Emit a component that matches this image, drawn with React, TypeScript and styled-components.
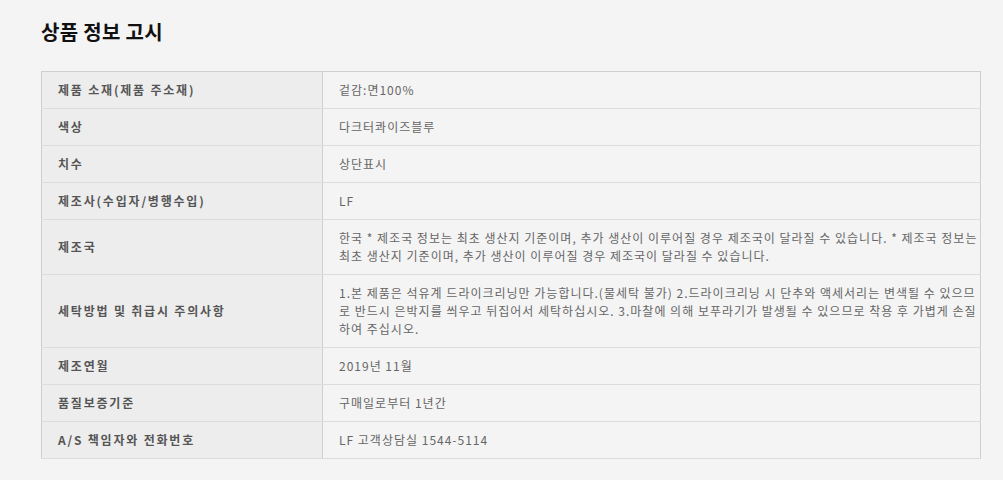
import React from "react"
import styled, { createGlobalStyle } from "styled-components"

const GlobalStyle = createGlobalStyle`
  html, body {
    margin: 0;
    padding: 0;
    background: #f4f4f4;
  }

  body {
    font-family: "Noto Sans CJK KR", "Noto Sans", sans-serif;
  }
`

const NoticeSection = styled.section`
  padding: 18px 22px 0 41px;
  width: 940px;
`

const Title = styled.h2`
  margin: 0 0 25px;
  font-size: 20px;
  line-height: 28px;
  font-weight: 700;
  color: #111;
  letter-spacing: 0.3px;
`

const InfoTable = styled.table`
  width: 940px;
  border-collapse: collapse;
  border: 1px solid #cfcfcf;
  table-layout: fixed;
`

const LabelCell = styled.th`
  width: 281px;
  box-sizing: border-box;
  padding: 9px 16px;
  background: #ededed;
  border-right: 1px solid #cfcfcf;
  border-bottom: 1px solid #dcdcdc;
  text-align: left;
  vertical-align: middle;
  font-size: 12px;
  line-height: 18px;
  font-weight: 700;
  color: #555;
  letter-spacing: 1.8px;
`

const ValueCell = styled.td`
  padding: 9px 2px 9px 16px;
  border-bottom: 1px solid #dcdcdc;
  font-size: 12px;
  line-height: 18px;
  color: #666;
  word-break: break-all;
  letter-spacing: 1px;
`

const rows = [
  { label: "제품 소재(제품 주소재)", value: "겉감:면100%" },
  { label: "색상", value: "다크터콰이즈블루" },
  { label: "치수", value: "상단표시" },
  { label: "제조사(수입자/병행수입)", value: "LF" },
  {
    label: "제조국",
    value:
      "한국 * 제조국 정보는 최초 생산지 기준이며, 추가 생산이 이루어질 경우 제조국이 달라질 수 있습니다. * 제조국 정보는 최초 생산지 기준이며, 추가 생산이 이루어질 경우 제조국이 달라질 수 있습니다.",
  },
  {
    label: "세탁방법 및 취급시 주의사항",
    value:
      "1.본 제품은 석유계 드라이크리닝만 가능합니다.(물세탁 불가) 2.드라이크리닝 시 단추와 액세서리는 변색될 수 있으므로 반드시 은박지를 씌우고 뒤집어서 세탁하십시오. 3.마찰에 의해 보푸라기가 발생될 수 있으므로 착용 후 가볍게 손질하여 주십시오.",
  },
  { label: "제조연월", value: "2019년 11월" },
  { label: "품질보증기준", value: "구매일로부터 1년간" },
  { label: "A/S 책임자와 전화번호", value: "LF 고객상담실 1544-5114" },
]

export default function App(): JSX.Element {
  return (
    <>
      <GlobalStyle />
      <NoticeSection>
        <Title>상품 정보 고시</Title>
        <InfoTable>
          <tbody>
            {rows.map((row, index) => (
              <tr key={index}>
                <LabelCell scope="row">{row.label}</LabelCell>
                <ValueCell>{row.value}</ValueCell>
              </tr>
            ))}
          </tbody>
        </InfoTable>
      </NoticeSection>
    </>
  )
}
